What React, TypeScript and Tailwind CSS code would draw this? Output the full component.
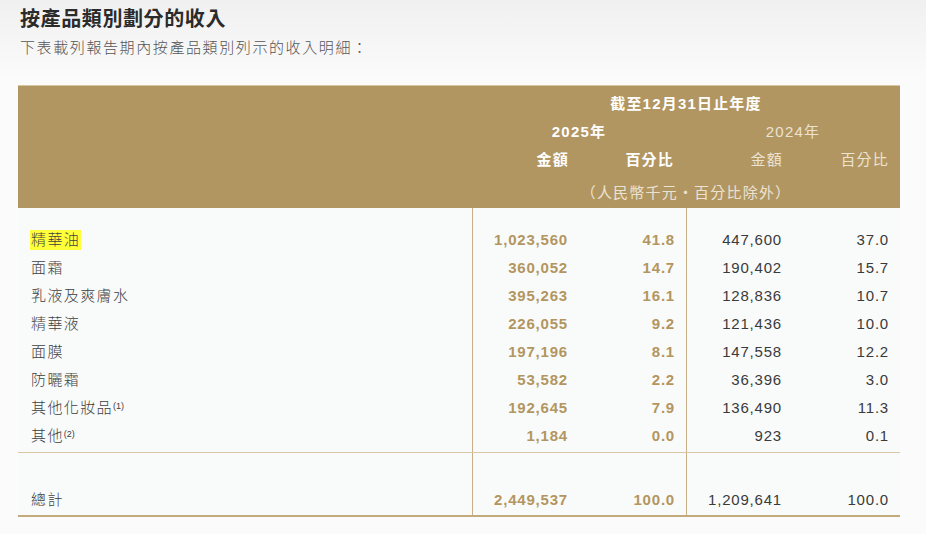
import React from 'react';

type Row = {
	label: string;
	note?: string;
	highlight?: boolean;
	a: string;
	ap: string;
	b: string;
	bp: string;
};

const rows: Row[] = [
	{ label: '精華油', highlight: true, a: '1,023,560', ap: '41.8', b: '447,600', bp: '37.0' },
	{ label: '面霜', a: '360,052', ap: '14.7', b: '190,402', bp: '15.7' },
	{ label: '乳液及爽膚水', a: '395,263', ap: '16.1', b: '128,836', bp: '10.7' },
	{ label: '精華液', a: '226,055', ap: '9.2', b: '121,436', bp: '10.0' },
	{ label: '面膜', a: '197,196', ap: '8.1', b: '147,558', bp: '12.2' },
	{ label: '防曬霜', a: '53,582', ap: '2.2', b: '36,396', bp: '3.0' },
	{ label: '其他化妝品', note: '(1)', a: '192,645', ap: '7.9', b: '136,490', bp: '11.3' },
	{ label: '其他', note: '(2)', a: '1,184', ap: '0.0', b: '923', bp: '0.1' },
];

const grid = 'grid grid-cols-[454px_107px_107px_107px_107px]';
const numCell = 'flex items-center justify-end pr-[11px] tracking-[0.8px]';

const Spacer = ({ h }: { h: string }) => (
	<div className={`${grid} ${h}`}>
		<div />
		<div className="border-l-[1.5px] border-[#c7b088]" />
		<div />
		<div className="border-l-[1.5px] border-[#c7b088]" />
		<div />
	</div>
);

const BodyRow = ({ r }: { r: Row }) => (
	<div className={`${grid} h-[28px] text-[15px]`}>
		<div className="flex items-center pl-[12px] tracking-[1.4px] font-light text-[#3f3f3f]">
			<span className={r.highlight ? 'bg-[#ffff3a] px-[1px] leading-[20px]' : 'px-[1px]'}>{r.label}</span>
			{r.note && <sup className="text-[9px] tracking-normal -ml-[1px] top-[-2px]">{r.note}</sup>}
		</div>
		<div className={`${numCell} border-l-[1.5px] border-[#c7b088] font-bold text-[#b3965f]`}>{r.a}</div>
		<div className={`${numCell} font-bold text-[#b3965f]`}>{r.ap}</div>
		<div className={`${numCell} border-l-[1.5px] border-[#c7b088] text-[#3a3a3a]`}>{r.b}</div>
		<div className={`${numCell} text-[#3a3a3a]`}>{r.bp}</div>
	</div>
);

export default function App() {
	return (
		<div
			className="w-[926px] h-[534px] overflow-hidden bg-[linear-gradient(to_bottom,#f0f0f0,#fbfbfb_80px)]"
			style={{ fontFamily: '"Liberation Sans", "Noto Sans CJK TC", sans-serif' }}
		>
			<div className="pl-[20px] pt-[6px]">
				<h1 className="text-[20px] font-bold leading-[26px] tracking-[0.6px] text-[#2b2b2b]">按產品類別劃分的收入</h1>
				<p className="mt-[6px] text-[15px] font-light leading-[20px] tracking-[1.6px] text-[#555]">下表載列報告期內按產品類別列示的收入明細：</p>
			</div>

			<div className="ml-[18px] mt-[27px] w-[882px] bg-[#f9fbfb]">
				{/* header band */}
				<div className="bg-[#b29662] border-t border-[#d6c6a2] pt-[4px] pb-[1px] text-[15px] tracking-[1.2px]">
					<div className={`${grid} h-[28px]`}>
						<div />
						<div className="col-span-4 flex items-center justify-center font-bold text-white">截至12月31日止年度</div>
					</div>
					<div className={`${grid} h-[28px]`}>
						<div />
						<div className="col-span-2 flex items-center justify-center font-bold text-white">2025年</div>
						<div className="col-span-2 flex items-center justify-center text-[#ebe3d2]">2024年</div>
					</div>
					<div className={`${grid} h-[28px]`}>
						<div />
						<div className="flex items-center justify-end pr-[10px] font-bold text-white">金額</div>
						<div className="flex items-center justify-end pr-[12px] font-bold text-white">百分比</div>
						<div className="flex items-center justify-end pr-[10px] text-[#ebe3d2]">金額</div>
						<div className="flex items-center justify-end pr-[11px] text-[#ebe3d2]">百分比</div>
					</div>
					<div className={`${grid} h-[28px] mt-[5px]`}>
						<div />
						<div className="col-span-4 flex items-center justify-center text-[#ebe3d2]">（人民幣千元・百分比除外）</div>
					</div>
				</div>

				<Spacer h="h-[18px]" />
				{rows.map((r) => (
					<BodyRow key={r.label} r={r} />
				))}
				<Spacer h="h-[2px]" />

				<div className="border-t-[1.5px] border-[#d8c7a3]">
					<Spacer h="h-[33px]" />
					<BodyRow r={{ label: '總計', a: '2,449,537', ap: '100.0', b: '1,209,641', bp: '100.0' }} />
					<Spacer h="h-[1px]" />
				</div>
				<div className="h-[2px] bg-[#c3aa7c]" />
			</div>
		</div>
	);
}
